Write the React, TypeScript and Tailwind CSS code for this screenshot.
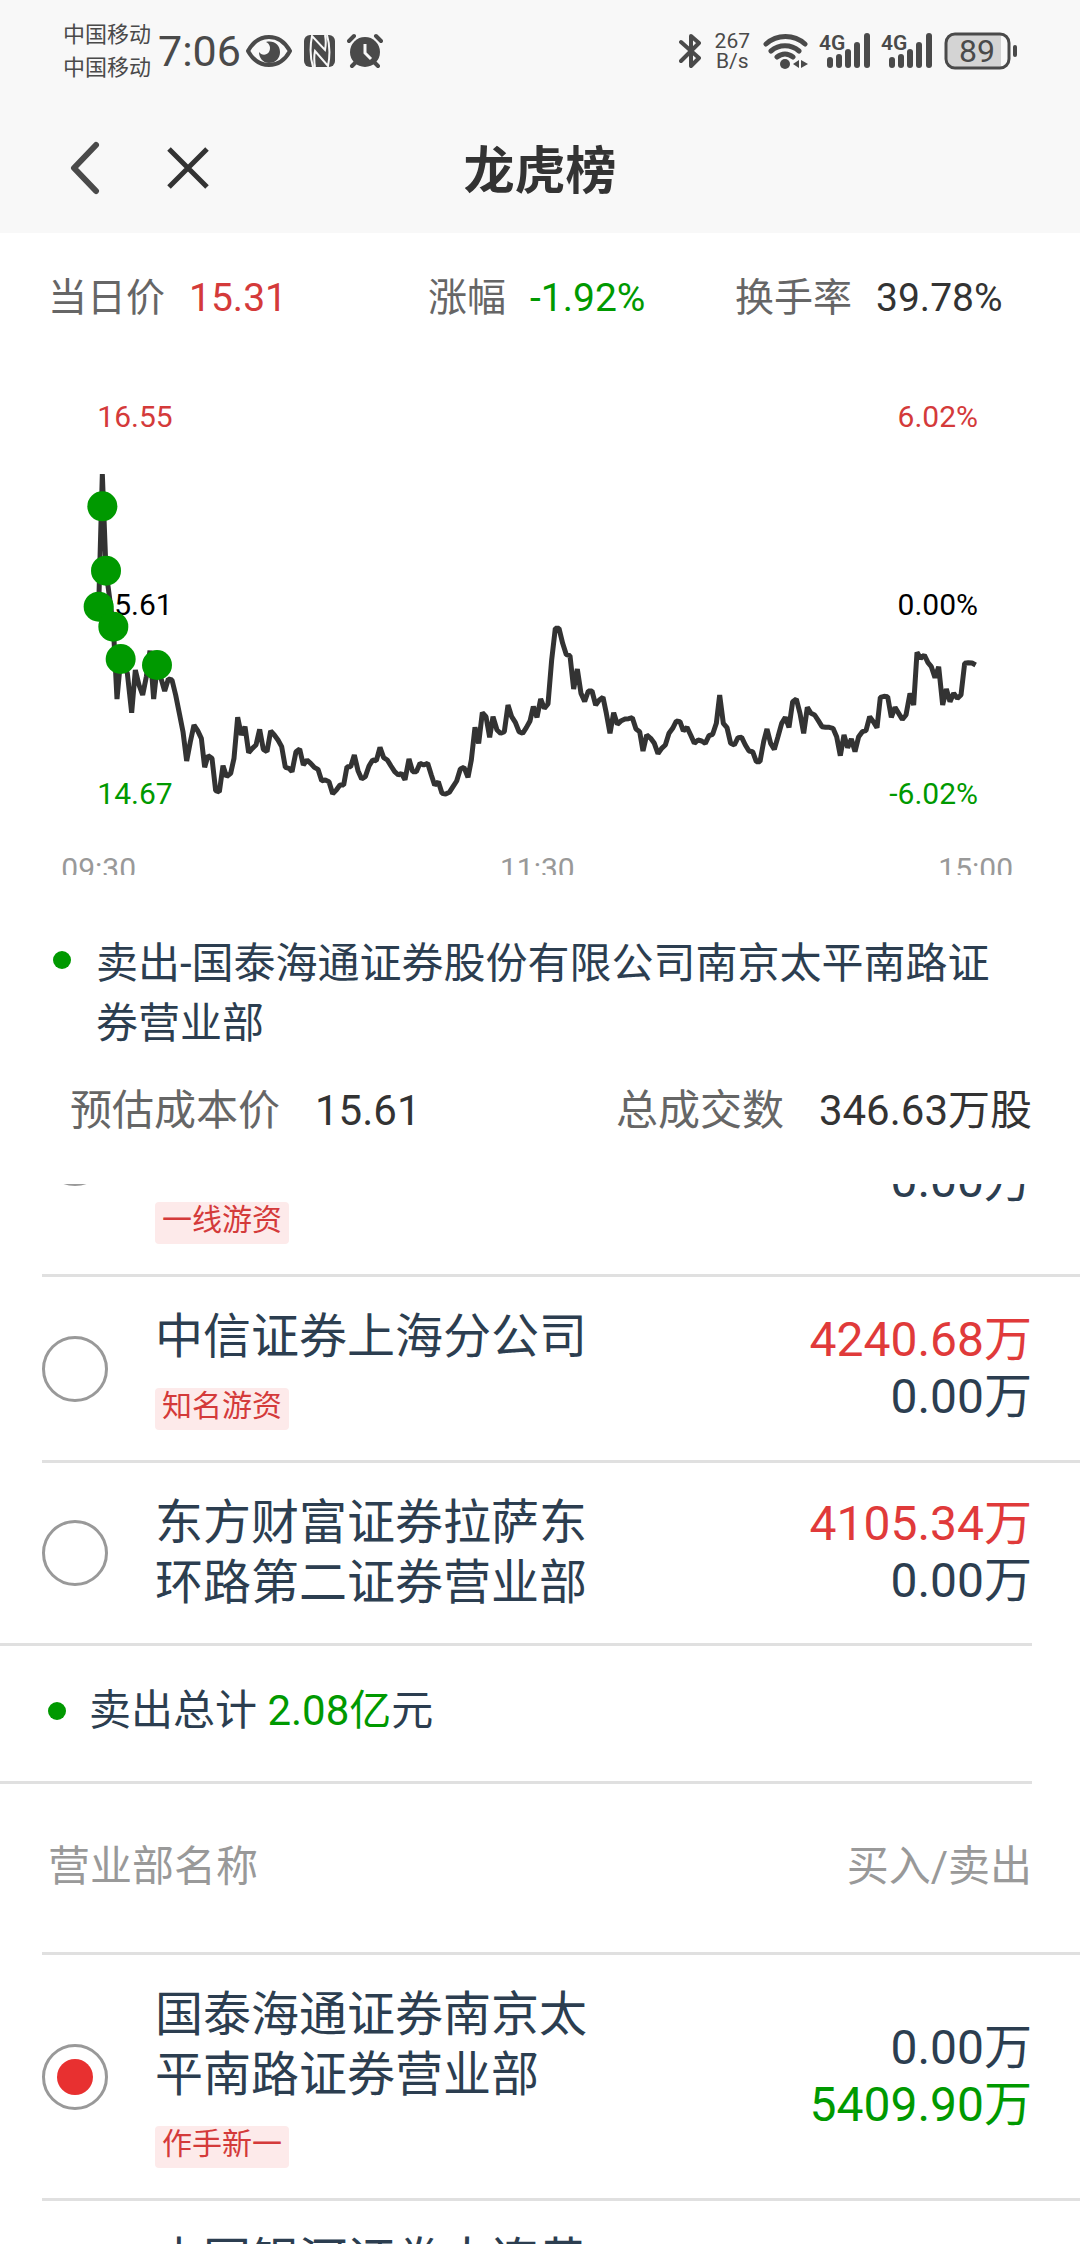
import { useId, useState } from 'react';

// ─── Data ─────────────────────────────────────────────────────────────────────

interface Seat {
  id: string;
  name?: string;
  tag?: string;
  buy?: string;
  sell?: string;
}

const BUY_SEATS: Seat[] = [
  { id: 'b3', tag: '一线游资', sell: '0.00万' },
  { id: 'b4', name: '中信证券上海分公司', tag: '知名游资', buy: '4240.68万', sell: '0.00万' },
  { id: 'b5', name: '东方财富证券拉萨东环路第二证券营业部', buy: '4105.34万', sell: '0.00万' },
];

const SELL_SEATS: Seat[] = [
  { id: 's1', name: '国泰海通证券南京太平南路证券营业部', tag: '作手新一', buy: '0.00万', sell: '5409.90万' },
  { id: 's2', name: '中国银河证券大连黄' },
];

// Intraday price line, in chart units
const PRICES =
  '296,680 307,282 318,572 340,740 351,957 362,837 382,880 395,998 406,870 417,915 428,945 439,890 450,812 461,957 472,855 483,895 494,933 505,897 516,900 527,945 538,1000 549,1055 560,1143 571,1085 582,1035 593,1052 604,1075 614,1162 624,1127 636,1135 647,1232 658,1236 669,1157 680,1190 692,1180 702,1135 713,1012 724,1065 735,1040 746,1118 757,1105 768,1095 779,1048 790,1108 801,1115 812,1053 823,1065 834,1080 845,1100 856,1162 867,1165 876,1175 888,1115 899,1107 910,1155 921,1140 932,1150 943,1162 954,1168 965,1202 976,1200 987,1205 998,1241 1009,1230 1020,1215 1031,1215 1041,1160 1052,1160 1063,1125 1074,1172 1085,1197 1096,1190 1107,1158 1118,1140 1129,1142 1140,1102 1151,1133 1162,1140 1173,1158 1184,1175 1195,1185 ' +
  '1204,1180 1215,1199 1227,1137 1238,1175 1249,1175 1260,1150 1271,1155 1283,1150 1294,1185 1304,1216 1315,1205 1326,1240 1337,1242 1348,1237 1359,1220 1370,1203 1381,1167 1392,1162 1404,1192 1414,1140 1425,1042 1436,1090 1447,998 1458,1010 1469,1072 1479,1010 1491,1050 1502,1060 1513,1055 1524,975 1535,1010 1546,1027 1557,1055 1568,1060 1579,1043 1590,1023 1600,980 1611,1012 1622,957 1633,985 1644,972 1655,840 1666,745 1677,745 1688,790 1699,824 1710,827 1721,927 1732,867 1743,940 1754,964 1765,933 1776,933 1787,975 1798,960 1809,952 1819,1000 1830,1060 1841,998 1852,1033 1864,1022 1875,1017 1886,1016 1897,1013 1908,1047 1919,1055 1929,1113 1940,1065 1952,1075 1963,1090 1974,1121 1985,1105 1996,1095 2007,1060 2018,1045 2029,1023 2040,1025 2050,1053 2061,1042 2072,1065 2083,1090 2094,1080 2105,1083 2116,1090 2127,1067 2138,1063 2149,1030 2159,945 2170,1030 2181,1043 2192,1090 2203,1095 2214,1073 2225,1072 2236,1095 2247,1113 2258,1115 2269,1145 ' +
  '2280,1145 2291,1085 2301,1047 2312,1090 2323,1108 2334,1070 2345,1030 2356,1012 2367,1042 2378,965 2389,957 2400,1000 2411,1060 2422,982 2433,1000 2444,1005 2455,1022 2466,1040 2477,1042 2488,1042 2499,1045 2510,1070 2521,1127 2532,1065 2543,1103 2554,1077 2565,1115 2576,1070 2587,1055 2598,1052 2609,1010 2620,1025 2631,1043 2641,952 2652,949 2663,950 2674,1012 2685,982 2696,1000 2707,1018 2718,1005 2730,940 2741,975 2751,817 2762,835 2773,825 2784,848 2794,860 2805,893 2816,860 2828,975 2839,927 2850,965 2861,940 2872,955 2883,945 2894,850 2905,848 2916,849 2927,855';

const TRADES = [
  [307, 379],
  [318, 572],
  [296, 680],
  [340, 740],
  [362, 837],
  [471, 855],
];

// ─── Page ─────────────────────────────────────────────────────────────────────

export default function App() {
  const [selected, setSelected] = useState('s1');

  return (
    <div className="flex h-screen flex-col overflow-hidden bg-white font-[Roboto,'Noto_Sans_CJK_SC',sans-serif] text-[#2c3e50]">
      <header className="shrink-0 bg-[#f8f8f8]">
        <StatusBar />
        <nav className="grid h-[131px] grid-cols-[1fr_auto_1fr] items-center">
          <div className="flex items-center gap-[64px] pl-[68px]">
            <button type="button" aria-label="返回">
              <svg width="35" height="54" viewBox="0 0 35 54" fill="none" stroke="#4a4a4a" strokeWidth="6" strokeLinecap="round" strokeLinejoin="round">
                <path d="M28 4 6 27l22 23" />
              </svg>
            </button>
            <button type="button" aria-label="关闭">
              <svg width="42" height="42" viewBox="0 0 42 42" fill="none" stroke="#333" strokeWidth="5">
                <path d="m2 2 38 38M40 2 2 40" />
              </svg>
            </button>
          </div>
          <h1 className="pt-[10px] text-[51px] font-bold text-[#333]">龙虎榜</h1>
        </nav>
      </header>

      <main className="flex min-h-0 flex-1 flex-col">
        <section className="shrink-0">
          <dl className="grid h-[130px] grid-cols-[380fr_307fr_345fr] items-center pl-[48px] text-[39px]">
            <Stat label="当日价" value="15.31" color="text-[#d43a3a]" />
            <Stat label="涨幅" value="-1.92%" color="text-[#009900]" />
            <Stat label="换手率" value="39.78%" color="text-[#333]" />
          </dl>

          <PriceChart />

          <div className="mt-[59px] flex items-start gap-[25px] pl-[53px] pr-[72px]">
            <Dot />
            <p className="flex-1 text-[42px] leading-[60px]">
              卖出-国泰海通证券股份有限公司南京太平南路证券营业部
            </p>
          </div>

          <dl className="mt-[26px] mb-[44px] flex h-[60px] items-center justify-between pl-[70px] pr-[48px] text-[42px]">
            <div className="flex gap-[35px]">
              <dt className="text-[#666]">预估成本价</dt>
              <dd className="text-[#333]">15.61</dd>
            </div>
            <div className="flex gap-[35px]">
              <dt className="text-[#666]">总成交数</dt>
              <dd className="text-[#333]">346.63万股</dd>
            </div>
          </dl>
        </section>

        {/* Scrolled list */}
        <section className="min-h-0 flex-1 overflow-hidden">
          <div className="-mt-[153px] pl-[42px]">
            <SeatTable seats={BUY_SEATS} side="buy" selected={selected} onSelect={setSelected} />
          </div>

          <div className="mr-[48px] flex h-[141px] items-center gap-[23px] border-y-[3px] border-[#e0e0e0] pl-[48px] pb-[6px]">
            <Dot />
            <p className="text-[42px]">
              卖出总计 <span className="text-[#009900]">2.08亿</span>元
            </p>
          </div>

          <div className="pl-[42px]">
            <SeatTable seats={SELL_SEATS} side="sell" selected={selected} onSelect={setSelected} withHead />
          </div>
        </section>
      </main>
    </div>
  );
}

// ─── Seats ────────────────────────────────────────────────────────────────────

interface SeatTableProps {
  seats: Seat[];
  side: 'buy' | 'sell';
  selected: string;
  onSelect: (id: string) => void;
  withHead?: boolean;
}

function SeatTable({ seats, side, selected, onSelect, withHead }: SeatTableProps) {
  const group = useId();

  return (
    <table className="w-full border-separate border-spacing-0">
      {withHead && (
        <thead>
          <tr className="text-[42px] text-[#999]">
            <th colSpan={2} className="h-[171px] border-b-[3px] border-[#e0e0e0] pl-[6px] pb-[4px] text-left font-normal">
              营业部名称
            </th>
            <th className="border-b-[3px] border-[#e0e0e0] pr-[48px] pb-[4px] text-right font-normal">买入/卖出</th>
          </tr>
        </thead>
      )}
      <tbody>
        {seats.map((seat, i) => {
          const last = i === seats.length - 1;
          const line = last ? '' : 'border-b-[3px] border-[#e0e0e0]';
          const nameHeight = seat.buy ? '' : 'min-h-[120px]';
          const inputId = `${group}-${seat.id}`;
          return (
            <tr key={seat.id}>
              <td className={`w-[113px] align-middle ${line}`}>
                <input
                  id={inputId}
                  type="radio"
                  name="seat"
                  checked={selected === seat.id}
                  onChange={() => onSelect(seat.id)}
                  className="block size-[66px] appearance-none rounded-full border-[3px] border-[#999] bg-clip-content p-[12px] checked:bg-[#e83030]"
                />
              </td>
              <td className={`py-[30px] ${line}`}>
                <label htmlFor={inputId} className="block w-[450px] text-[48px] leading-[60px]">
                  <span className={`block ${nameHeight}`}>{seat.name}</span>
                  {seat.tag && (
                    <span className="mt-[21px] block h-[42px] w-fit rounded-[4px] bg-[#fdeaea] px-[7px] text-[30px] leading-[36px] text-[#d43a3a]">
                      {seat.tag}
                    </span>
                  )}
                </label>
              </td>
              <td className={`pr-[48px] pb-[2px] text-right align-middle text-[48px] leading-[57px] ${line}`}>
                <div className={side === 'buy' ? 'h-[57px] text-[#e03a3a]' : 'h-[57px]'}>{seat.buy}</div>
                <div className={side === 'sell' ? 'h-[57px] text-[#009900]' : 'h-[57px]'}>{seat.sell}</div>
              </td>
            </tr>
          );
        })}
      </tbody>
    </table>
  );
}

// ─── Chart ────────────────────────────────────────────────────────────────────

function PriceChart() {
  return (
    <svg viewBox="0 -51 3240 1536" className="block w-full" fontSize="90">
      <text x="292" y="140" fill="#d43a3a">16.55</text>
      <text x="292" y="705" fill="#000">15.61</text>
      <text x="292" y="1272" fill="#009900">14.67</text>
      <g textAnchor="end">
        <text x="2934" y="140" fill="#d43a3a">6.02%</text>
        <text x="2934" y="705" fill="#000">0.00%</text>
        <text x="2934" y="1272" fill="#009900">-6.02%</text>
      </g>
      <g fill="#999" textAnchor="middle">
        <text x="296" y="1496">09:30</text>
        <text x="1612" y="1496">11:30</text>
        <text x="2927" y="1496">15:00</text>
      </g>
      <polyline points={PRICES} fill="none" stroke="#333" strokeWidth="15" strokeLinejoin="bevel" />
      {TRADES.map(([x, y]) => (
        <circle key={x} cx={x} cy={y} r="45" fill="#009900" />
      ))}
    </svg>
  );
}

// ─── Status bar ───────────────────────────────────────────────────────────────

function StatusBar() {
  return (
    <div className="flex h-[102px] items-center justify-between pl-[63px] pr-[62px] text-[#4a4a4a]">
      <div className="flex items-center">
        <div className="text-[22px] leading-[33px]">
          <div>中国移动</div>
          <div>中国移动</div>
        </div>
        <span className="ml-[7px] text-[43px] leading-[66px]">7:06</span>
        <svg className="ml-[5px]" width="46" height="34" viewBox="0 0 46 34" fill="none">
          <path d="M2 17C7 8 14 3 23 3s16 5 21 14c-5 9-12 14-21 14S7 26 2 17Z" stroke="currentColor" strokeWidth="4" strokeLinejoin="round" />
          <path d="M20 8c8-2 14 3 14 10 0 6-4 11-11 11-6 0-10-5-10-11 2 3 7 4 10 0 2-4 1-8-3-10Z" fill="currentColor" />
        </svg>
        <svg className="ml-[12px]" width="31" height="34" viewBox="0 0 31 34" fill="none">
          <rect y="1" width="31" height="32" rx="6" fill="currentColor" />
          <path d="M9 33C6 23 6 12 8 2l13 14c1-5 1-10 0-15M23 1c3 10 3 21 1 31L11 17c-1 5-1 10 0 16" stroke="#f8f8f8" strokeWidth="2" />
        </svg>
        <svg className="ml-[12px]" width="36" height="36" viewBox="0 0 36 36" fill="none" stroke="currentColor" strokeWidth="4" strokeLinecap="round">
          <circle cx="18" cy="19" r="15" fill="currentColor" stroke="none" />
          <path d="M2 8l5-5M34 8l-5-5M5 33l4-4M31 33l-4-4" />
          <path d="M18 11v9l6 6" stroke="#f8f8f8" strokeWidth="3" strokeLinecap="butt" />
        </svg>
      </div>

      <div className="flex items-center">
        <svg width="22" height="36" viewBox="0 0 22 36" fill="none" stroke="currentColor" strokeWidth="4" strokeLinecap="round" strokeLinejoin="round">
          <path d="M2 9l18 16-8 8V3l8 7L2 28" />
        </svg>
        <div className="ml-[14px] text-center text-[21px] leading-[20px]">
          <div>267</div>
          <div>B/s</div>
        </div>
        <svg className="ml-[13px]" width="45" height="36" viewBox="0 0 45 36" fill="none" stroke="currentColor" strokeWidth="5" strokeLinecap="round">
          <path d="M3 11c11-10 28-10 39 0M8 18c8-7 20-7 28 0M14 24c5-4 11-4 16 0" />
          <circle cx="22" cy="31" r="5" fill="currentColor" stroke="none" />
          <path d="m30 31 6-4v8ZM45 31l-7-4v8Z" fill="currentColor" stroke="none" />
        </svg>
        <Signal />
        <Signal />
        <svg className="ml-[12px]" width="74" height="38" viewBox="0 0 74 38">
          <path d="M12 3h45v32H12a9 9 0 0 1-9-9V12a9 9 0 0 1 9-9Z" fill="#d4d4d4" />
          <rect x="2" y="2" width="63" height="34" rx="9" fill="none" stroke="currentColor" strokeWidth="3" />
          <rect x="69" y="13" width="4" height="12" rx="2" fill="currentColor" />
          <text x="33" y="30" fontSize="32" textAnchor="middle" fill="currentColor">89</text>
        </svg>
      </div>
    </div>
  );
}

function Signal() {
  return (
    <svg className="ml-[12px] overflow-visible" width="50" height="36" viewBox="0 0 50 36" fill="currentColor">
      <text x="-1" y="17" fontSize="21" fontWeight="600">4G</text>
      <rect x="7" y="24" width="6" height="11" rx="3" />
      <rect x="16" y="21" width="6" height="14" rx="3" />
      <rect x="25" y="16" width="6" height="19" rx="3" />
      <rect x="34" y="9" width="6" height="26" rx="3" />
      <rect x="44" y="0" width="6" height="35" rx="3" />
    </svg>
  );
}

// ─── Small helpers ────────────────────────────────────────────────────────────

function Stat({ label, value, color }: { label: string; value: string; color: string }) {
  return (
    <div className="flex gap-[24px]">
      <dt className="text-[#666]">{label}</dt>
      <dd className={color}>{value}</dd>
    </div>
  );
}

function Dot() {
  return (
    <span className="flex h-[51px] shrink-0 items-center">
      <span className="size-[18px] rounded-full bg-[#009900]" />
    </span>
  );
}
